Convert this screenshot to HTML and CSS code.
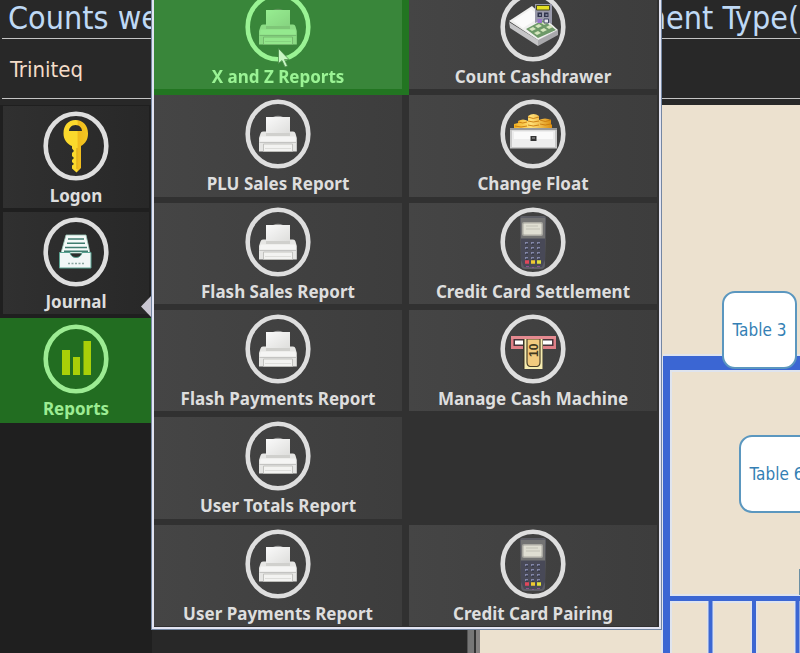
FILE: index.html
```html
<!DOCTYPE html>
<html lang="en">
<head>
<meta charset="utf-8">
<title>Triniteq</title>
<link rel="stylesheet" href="styles.css">
</head>
<body>
<svg class="defs" aria-hidden="true">
  <defs>
    <linearGradient id="paper" x1="0" y1="0" x2="1" y2="1">
      <stop offset="0" stop-color="#fafafa"/><stop offset="1" stop-color="#dededc"/>
    </linearGradient>
    <linearGradient id="gold" x1="0" x2="1">
      <stop offset="0" stop-color="#f2b01f"/><stop offset=".45" stop-color="#ffe078"/><stop offset="1" stop-color="#dd8f10"/>
    </linearGradient>
    <linearGradient id="keygold" x1="0" x2="1">
      <stop offset="0" stop-color="#fbd92c"/><stop offset=".55" stop-color="#fbd92c"/><stop offset=".6" stop-color="#f0bb1c"/><stop offset="1" stop-color="#f5c822"/>
    </linearGradient>
    <symbol id="ring" viewBox="0 0 66 70">
      <ellipse cx="33" cy="35" rx="30.3" ry="32.3" fill="none" stroke="currentColor" stroke-width="4.6"/>
    </symbol>
    <symbol id="printer" viewBox="0 0 66 70">
      <path d="M28 18q5-2.500 10 0z" fill="#999"/>
      <path d="M21 18h24v16H21z" fill="url(#paper)"/>
      <path d="M18 32.500h3V34h24v-1.500h3q2 0 2.500 2l1.300 4.500v13.500H14V39l1.500-4.500q.5-2 2.500-2z" fill="#e6e6e4"/>
      <path d="M21 34h24v3H21z" fill="#d0d0cd"/>
      <path d="M15.500 37.500h35l.5 5H15z" fill="#f5f5f4"/>
      <path d="M14.500 43.500h37" stroke="#c4c4c2" stroke-width="1"/>
      <path d="M18.500 45h29v7.500h-29z" fill="#f3f3f1" stroke="#b9b9b5" stroke-width=".8"/>
      <path d="M20 49.500h26" stroke="#dededb"/>
    </symbol>
    <symbol id="terminal" viewBox="0 0 66 70">
      <path d="M22 9h22q2 0 2 3l-1 46q0 4-4 4H25q-4 0-4-4l-1-46q0-3 2-3z" fill="#5d5e65"/>
      <path d="M21 11h24v20H21z" fill="#737373"/>
      <path d="M21 32h24v21l-3 7H24l-3-7z" fill="#484957"/>
      <rect x="22" y="15" width="21" height="14" rx="2" fill="#aaa9a2"/>
      <rect x="23.500" y="16.500" width="18" height="11" rx="1" fill="#dfded2"/>
      <path d="M26 19h12M26 22h14" stroke="#c1c0b5"/>
      <path d="M25 36h3m3 0h3m3 0h3M25 41h3m3 0h3m3 0h3M25 46h3m3 0h3m3 0h3M25 51h3m3 0h3m3 0h3" stroke="#8286a7" stroke-width="2.200"/>
      <path d="M26 37h2m4 0h2m4 0h2M26 42h2m4 0h2m4 0h2M26 47h2m4 0h2m4 0h2M26 52h2m4 0h2m4 0h2" stroke="#272a3b"/>
      <path d="M25 55h4" stroke="#e0485a" stroke-width="3.500"/><path d="M31 55h4" stroke="#efc931" stroke-width="3.500"/><path d="M37 55h4" stroke="#e0df3c" stroke-width="3.500"/>
      <path d="M26 59.500h3m3 1h2m3-1h3" stroke="#8a5191"/>
    </symbol>
  </defs>
</svg>

<div class="app">
  <header class="title-bar">
    <h1><span>Counts we</span><span>ment Type(</span></h1>
  </header>
  <div class="site-bar">Triniteq</div>

  <div class="workspace">
    <nav class="sidebar">
      <button class="side-item" type="button">
        <svg class="icon" viewBox="0 0 66 70" aria-hidden="true"><use href="#ring"/>
          <path fill="url(#keygold)" fill-rule="evenodd" d="M32.500 9C40 9 45 14.500 45 22.500c0 6-2.500 10-7 12.500v22l-4.500 4.500-4.500-4v-3l2-1.500-2-2v-2l2-2-2-2v-3l2-2-2-2.500V35c-5-2-8.500-6.500-8.500-12.500C20.500 14.500 25 9 32.500 9zM26 20h13c0-3-2.500-6-6.500-6S26 17 26 20z"/>
          <path d="M34 37v21" stroke="#dca51c" stroke-width="1.200"/>
        </svg>
        <span>Logon</span>
      </button>
      <button class="side-item" type="button">
        <svg class="icon" viewBox="0 0 66 70" aria-hidden="true"><use href="#ring"/>
          <path d="M23 18h20l4 18H18z" fill="#f4faf8" stroke="#9fcbbd" stroke-width=".8"/>
          <path d="M25 22h16M24 26.300h18M22 30.500h22M21 34.300h24" stroke="#3f7d70" stroke-width="1.600"/>
          <path d="M16.500 35.500H27q1 5 6 5t6-5h9V51H16.500z" fill="#f1f6f6" stroke="#5aa392" stroke-width="1"/>
          <path d="M25 46.500h17" stroke="#8ba6a1" stroke-width="1.300" stroke-dasharray="2 1.500"/>
        </svg>
        <span>Journal</span>
      </button>
      <button class="side-item active" type="button">
        <svg class="icon" viewBox="0 0 66 70" aria-hidden="true"><use href="#ring"/>
          <path d="M19 26h8v25h-8zM30 33h7v18h-7zM40.500 17H48v34h-7.500z" fill="#a9cf08"/>
        </svg>
        <span>Reports</span>
      </button>
    </nav>
    <div class="panel"></div>
    <div class="splitter"></div>
    <main class="floor">
      <svg class="walls" width="480" height="900" aria-hidden="true">
        <g fill="none" stroke="#dfe4ee">
          <path d="M186.500 900V252" stroke-width="11"/>
          <path d="M183 258H480" stroke-width="18"/>
          <path d="M190 493.500H480" stroke-width="9"/>
          <path d="M230.500 497V900M274 497V900M317.500 497V900" stroke-width="7"/>
        </g>
        <g fill="none" stroke="#3b66d3">
          <path d="M186.500 900V252" stroke-width="7"/>
          <path d="M183 258H480" stroke-width="14"/>
          <path d="M190 493.500H480" stroke-width="5"/>
          <path d="M230.500 496V900M274 496V900M317.500 496V900" stroke-width="4"/>
        </g>
        <path d="M319.500 464v26" stroke="#6b8fa3"/>
      </svg>
      <button class="table t3" type="button">Table 3</button>
      <button class="table t6" type="button">Table 6</button>
    </main>
  </div>

  <span class="pointer-notch"></span>
  <section class="menu" aria-label="Reports">
    <button class="tile selected" type="button"><svg class="icon" aria-hidden="true"><use href="#ring"/><use href="#printer"/></svg><span>X and Z Reports</span></button>
    <button class="tile" type="button">
      <svg class="icon" viewBox="0 0 66 70" aria-hidden="true"><use href="#ring"/>
        <path d="M9 30l29 18v6L10 36z" fill="#c5c5c7"/>
        <path d="M38 47l20-9v5L38 54z" fill="#a8a8ab"/>
        <path d="M9 29l23-15 26 24-20 10z" fill="#f0f0ef"/>
        <path d="M13 29l18-12 9 8-17 11z" fill="#fbfbfb"/>
        <path d="M26 37l17-9 13 10-18 8z" fill="#6d9968"/>
        <path d="M29 37l4-2 3 2-4 2zM35 34l4-2 3 2-4 2zM41 31l4-2 3 2-4 2zM34 41l4-2 3 2-4 2zM40 38l4-2 3 2-4 2zM46 35l4-2 3 2-4 2z" fill="#d5e5bd"/>
        <path d="M35 12h17v20l-4-2-6-2-7 3z" fill="#9899aa"/>
        <path d="M36.500 13.500h13V18h-13z" fill="#e5df22" stroke="#4a4c20"/>
        <path d="M37.500 20.500h4.500V25h-4.500zM44 20.500h4.500V25H44z" fill="#30354d"/>
        <path d="M37.500 27h4.500v4h-4.500z" fill="#9875c9"/><path d="M44 27h4.500v4H44z" fill="#e8e8ef" stroke="#414864"/>
        <path d="M39 23h2m4.500 0h2" stroke="#c7cce0"/>
      </svg><span>Count Cashdrawer</span></button>
    <button class="tile" type="button"><svg class="icon" aria-hidden="true"><use href="#ring"/><use href="#printer"/></svg><span>PLU Sales Report</span></button>
    <button class="tile" type="button">
      <svg class="icon" viewBox="0 0 66 70" aria-hidden="true"><use href="#ring"/>
        <path d="M14 29v-4l4-1v-2q5-3 10 0v7zM28 29V17q5.500-4 11 0v12zM39 29v-8q6-3 12 0v4l1 1v3z" fill="url(#gold)"/>
        <path d="M18 23q5 2 9 0M28 18q5 3 11 0M40 21q5 3 11 0M28 22q5 2 11 0M28 26q5 2 11 0M40 25q5 2 11 0M15 27q6 2 12 0" fill="none" stroke="#c97b0d" stroke-width=".9"/>
        <path d="M10 29h47v20.500H10z" fill="#c9c9c9"/>
        <path d="M10 29h47v2H10z" fill="#999"/>
        <path d="M12 31.500h43V48H12z" fill="#ededed"/>
        <path d="M14 33h39v7H14z" fill="#fafafa"/>
        <path d="M30.500 37h6v5h-6z" fill="#343434"/><path d="M32 39h3" stroke="#aaa"/>
      </svg><span>Change Float</span></button>
    <button class="tile" type="button"><svg class="icon" aria-hidden="true"><use href="#ring"/><use href="#printer"/></svg><span>Flash Sales Report</span></button>
    <button class="tile" type="button"><svg class="icon" aria-hidden="true"><use href="#ring"/><use href="#terminal"/></svg><span>Credit Card Settlement</span></button>
    <button class="tile" type="button"><svg class="icon" aria-hidden="true"><use href="#ring"/><use href="#printer"/></svg><span>Flash Payments Report</span></button>
    <button class="tile" type="button">
      <svg class="icon" viewBox="0 0 66 70" aria-hidden="true"><use href="#ring"/>
        <path d="M11 22h45v13H11z" fill="#df7f86"/>
        <path d="M13.500 25h40v7h-40z" fill="#47343a"/>
        <path d="M15 26.500h37v4H15z" fill="#fff"/>
        <path d="M23 24h20v31H23z" fill="#3b352b"/>
        <path d="M24.500 25H42.500v30H24.500z" fill="#f6ecb0"/>
        <path d="M27 25v23q0 4 3 4.500h7q3-.5 3-4.500V25z" fill="#f2cb7e" stroke="#4b4129" stroke-width="1.200"/>
        <text class="note-value" transform="translate(38 43) rotate(-90)">10</text>
        <path d="M11 22h45v3H11z" fill="#e58a90"/>
      </svg><span>Manage Cash Machine</span></button>
    <button class="tile" type="button"><svg class="icon" aria-hidden="true"><use href="#ring"/><use href="#printer"/></svg><span>User Totals Report</span></button>
    <div class="empty"></div>
    <button class="tile" type="button"><svg class="icon" aria-hidden="true"><use href="#ring"/><use href="#printer"/></svg><span>User Payments Report</span></button>
    <button class="tile" type="button"><svg class="icon" aria-hidden="true"><use href="#ring"/><use href="#terminal"/></svg><span>Credit Card Pairing</span></button>
  </section>
  <svg class="cursor" width="12" height="20" viewBox="0 0 12 20" aria-hidden="true"><path d="M.5.500v15l3.500-3 3 6.500 2.500-1-3-6.500H11z" fill="#c9f5c5" stroke="#4b8d4a" stroke-width=".8"/></svg>
</div>
</body>
</html>
```
FILE: styles.css
```css
* { box-sizing: border-box; }

body {
  margin: 0;
  background: #282828;
  font-family: "Noto Sans", "Open Sans", sans-serif;
}

button {
  margin: 0;
  padding: 0;
  border: 0;
  font: inherit;
  color: inherit;
}

.defs { position: absolute; width: 0; height: 0; }

.app {
  position: relative;
  display: flex;
  flex-direction: column;
  height: 100vh;
  overflow: hidden;
}

.title-bar {
  height: 39px;
  margin-left: 2px;
  border-bottom: 1px solid #c4c4c4;
  overflow: hidden;
}

h1 {
  display: grid;
  grid-template-columns: 630px 1fr;
  margin: 0;
  padding-left: 6px;
  font: 400 32px/36px "DejaVu Sans Condensed", "DejaVu Sans", sans-serif;
  color: #bfd9f5;
  white-space: nowrap;
}

.site-bar {
  height: 60px;
  margin-left: 2px;
  padding-left: 8px;
  border-bottom: 1px solid #c4c4c4;
  font: 400 22px/62px "DejaVu Sans Condensed", "DejaVu Sans", sans-serif;
  color: #f4dcc8;
}

.workspace {
  display: grid;
  grid-template-columns: 152px 315px 13px 1fr;
  flex: 1;
  min-height: 0;
  padding-top: 6px;
}

.sidebar {
  display: flex;
  flex-direction: column;
  gap: 4px;
  padding-top: 1px;
  background: #1f1f1f;
}

.side-item,
.tile {
  display: flex;
  flex-direction: column;
  align-items: center;
  font-size: 17px;
  font-weight: 700;
  line-height: 22px;
  color: #dedede;
  white-space: nowrap;
}

.side-item {
  height: 102px;
  margin: 0 3px;
  padding-top: 5px;
  background: linear-gradient(90deg, #303030, #282828);
}

.side-item.active {
  height: 105px;
  margin: 0;
  padding-top: 6px;
  background: #226d21;
  color: #9cec93;
}

.icon {
  flex: none;
  width: 66px;
  height: 70px;
  margin-bottom: 4px;
}

.panel { background: #282828; }

.splitter {
  background: #858281;
  border-left: 1px solid #555;
  box-shadow: inset 6px 0 #777, inset 8px 0 #333;
}

.floor {
  position: relative;
  overflow: hidden;
  background: #ece1cf;
}

.walls { position: absolute; left: 0; top: 0; }

.table {
  position: absolute;
  width: 75px;
  height: 78px;
  border: 2px solid #5b97bf;
  border-radius: 13px;
  background: #fff;
  font: 400 17px/24px "DejaVu Sans Condensed", "DejaVu Sans", sans-serif;
  color: #347fb4;
  white-space: nowrap;
}

.t3 { left: 242px; top: 186px; }
.t6 { left: 259px; top: 330px; }

.menu {
  position: absolute;
  left: 152px;
  top: -16px;
  bottom: 24px;
  width: 509px;
  display: grid;
  grid-template-columns: 1fr 1fr;
  grid-auto-rows: 1fr;
  gap: 6px 7px;
  padding: 2px 2px 1px 0;
  border: 2px solid #e2e4f2;
  outline: 1px solid #7487a3;
  background: #313131;
  overflow: hidden;
}

.tile {
  padding-top: 4px;
  background: linear-gradient(90deg, #454545, #3d3d3d);
}

.tile.selected {
  position: relative;
  z-index: 1;
  background: #5e8d64;
  box-shadow: 3px 2px 0 4px #227521;
  color: #fff;
}

/* Green wash over the chosen tile and its icon */
.tile.selected::after {
  content: "";
  position: absolute;
  inset: 0;
  background: #9af394;
  mix-blend-mode: multiply;
}

.note-value { font: 700 12px "Liberation Sans", sans-serif; fill: #403820; }

.pointer-notch {
  position: absolute;
  left: 141px;
  top: 295px;
  width: 11px;
  height: 23px;
  background: #c9c6d1;
  clip-path: polygon(0 50%, 100% 0, 100% 100%);
}

.cursor { position: absolute; left: 278px; top: 48px; z-index: 2; }
```
